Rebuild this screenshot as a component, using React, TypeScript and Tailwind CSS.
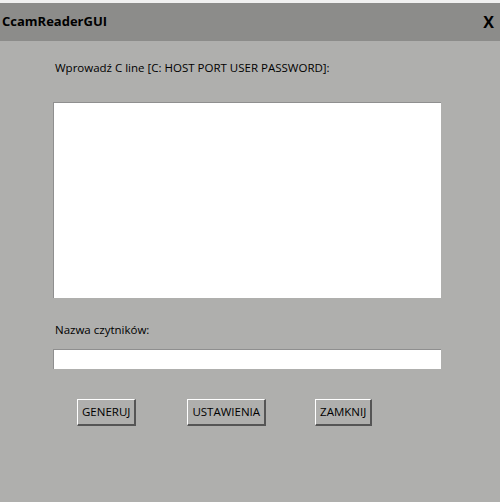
export default function App() {
  const font = { fontFamily: '"Open Sans", "Liberation Sans", sans-serif' };
  const btn =
    "h-[27px] px-[4px] bg-[#afafad] border-t border-l border-t-white border-l-white border-b-2 border-r-2 border-b-[#555] border-r-[#555]";
  return (
    <div className="w-[500px] h-[502px] flex flex-col bg-[#afafad] overflow-hidden" style={font}>
      <div className="h-[3px] bg-[#f0f0f0]" />
      <div className="h-[38px] bg-[#8c8c8a] flex items-center justify-between pl-[2px] pr-[6px]">
        <span className="text-[13px] font-bold text-black">CcamReaderGUI</span>
        <span className="text-[16px] font-bold text-black">X</span>
      </div>
      <div className="flex-1 flex flex-col pl-[53px] pr-[59px]">
        <div className="mt-[18px] pl-[2px] text-[11.5px] text-black leading-[18px]">
          Wprowadź C line [C: HOST PORT USER PASSWORD]:
        </div>
        <div className="mt-[25px] h-[196px] bg-white border-t border-l border-[#8f8f8f]" />
        <div className="mt-[23px] pl-[2px] text-[11.5px] text-black leading-[18px]">Nazwa czytników:</div>
        <div className="mt-[10px] h-[20px] bg-white border-t border-l border-[#8f8f8f]" />
        <div className="mt-[30px] flex pl-[24px] text-[11.5px] text-black">
          <button className={btn}>GENERUJ</button>
          <button className={`ml-[51px] ${btn}`}>USTAWIENIA</button>
          <button className={`ml-[49px] ${btn}`}>ZAMKNIJ</button>
        </div>
      </div>
    </div>
  );
}
